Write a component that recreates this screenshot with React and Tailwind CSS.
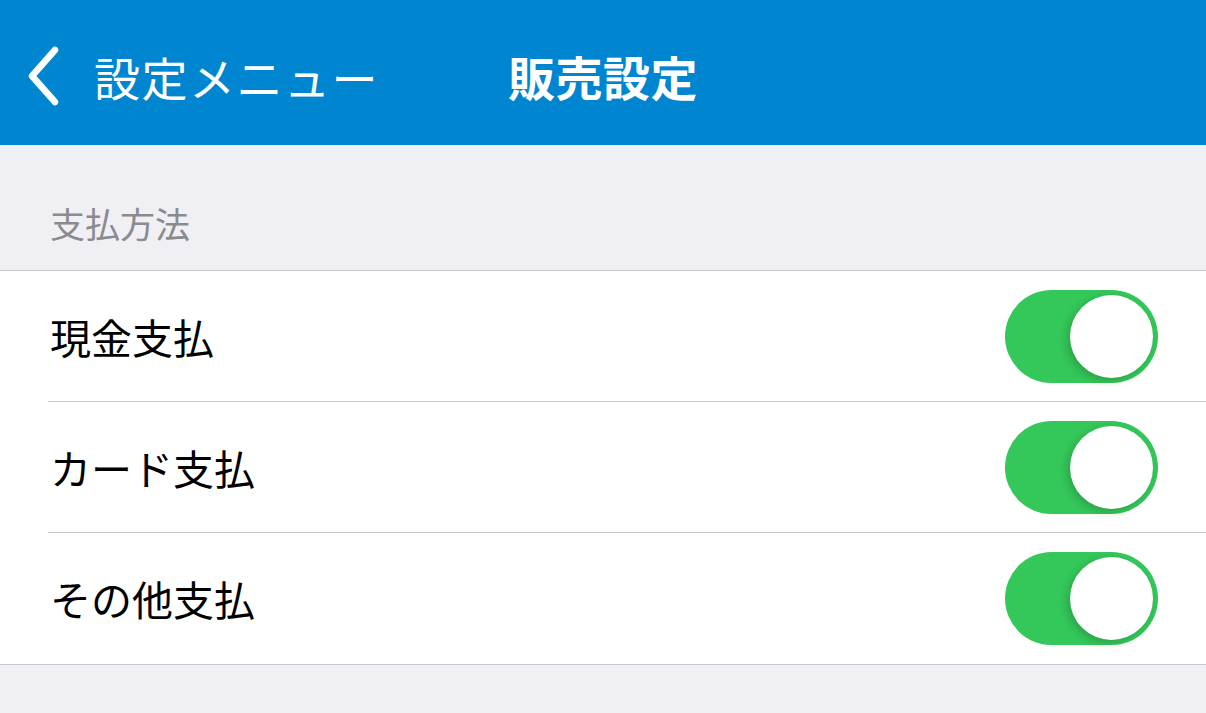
const font = { fontFamily: '"Noto Sans CJK JP", "Noto Sans", sans-serif' };

function BackChevron() {
  return (
    <svg width="40" height="64" viewBox="0 0 40 64" fill="none" className="shrink-0">
      <polyline
        points="31,6 8,32 31,58"
        stroke="white"
        strokeWidth="6.5"
        strokeLinecap="round"
        strokeLinejoin="round"
      />
    </svg>
  );
}

function Toggle() {
  return (
    <div className="flex h-[93px] w-[153px] items-center justify-end rounded-full bg-[#34c759] p-[5px]">
      <div className="h-[83px] w-[83px] rounded-full bg-white shadow-[-3px_3px_8px_rgba(0,0,0,0.18)]" />
    </div>
  );
}

const rows = ["現金支払", "カード支払", "その他支払"];

export default function App() {
  return (
    <div className="flex h-[713px] w-[1206px] flex-col bg-[#efeff4]" style={font}>
      <header className="flex h-[145px] shrink-0 items-center bg-[#0086d1] pt-[6px] text-white">
        <div className="flex w-[400px] items-center pl-[24px]">
          <BackChevron />
          <span className="ml-[30px] text-[46px] leading-none tracking-[1.5px]">設定メニュー</span>
        </div>
        <h1 className="ml-[108px] text-[47px] font-bold leading-none tracking-[0.5px]">販売設定</h1>
      </header>
      <div className="flex h-[125px] items-end px-[50px] pb-[30px]">
        <span className="text-[35px] leading-none text-[#8a8a8f]">支払方法</span>
      </div>
      <div className="border-y border-[#c8c7cc] bg-white">
        {rows.map((label, i) => (
          <div key={label} className="pl-[48px]">
            <div
              className={
                "flex h-[131px] items-center justify-between pr-[48px] " +
                (i < rows.length - 1 ? "border-b border-[#c8c7cc]" : "")
              }
            >
              <span className="pl-[2px] text-[41px] leading-none text-black">{label}</span>
              <Toggle />
            </div>
          </div>
        ))}
      </div>
    </div>
  );
}
